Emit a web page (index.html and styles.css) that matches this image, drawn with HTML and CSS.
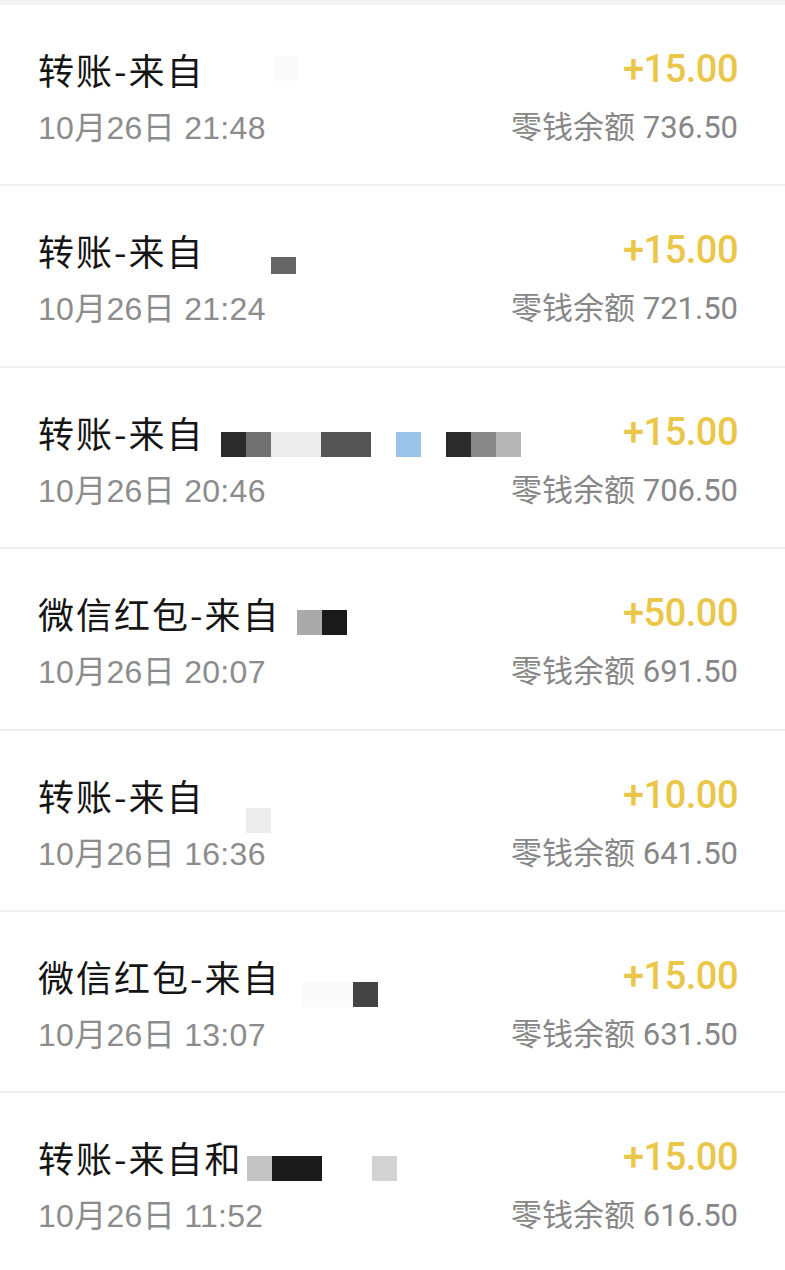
FILE: index.html
```html
<!DOCTYPE html>
<html lang="zh-CN">
<head>
  <meta charset="UTF-8">
  <meta name="viewport" content="width=device-width, initial-scale=1.0">
  <title>零钱明细</title>
  <link rel="stylesheet" href="styles.css">
</head>
<body>
  <div class="top-strip"></div>
  <ul class="bill-list">
    <li class="bill">
      <div class="bill-line">
        <div class="bill-title">转账-来自<span class="mosaic m1"><i class="c-ghost"></i></span></div>
        <div class="bill-amount">+15.00</div>
      </div>
      <div class="bill-line">
        <div class="bill-time">10月26日 21:48</div>
        <div class="bill-balance">零钱余额 736.50</div>
      </div>
    </li>
    <li class="bill">
      <div class="bill-line">
        <div class="bill-title">转账-来自<span class="mosaic m2"><i></i><i></i><i class="c-gray6 short"></i></span></div>
        <div class="bill-amount">+15.00</div>
      </div>
      <div class="bill-line">
        <div class="bill-time">10月26日 21:24</div>
        <div class="bill-balance">零钱余额 721.50</div>
      </div>
    </li>
    <li class="bill">
      <div class="bill-line">
        <div class="bill-title">转账-来自<span class="mosaic m3"><i class="c-gray2"></i><i class="c-gray7"></i><i class="c-grayE"></i><i class="c-grayE"></i><i class="c-gray5"></i><i class="c-gray5"></i><i></i><i class="c-blue"></i><i></i><i class="c-gray2"></i><i class="c-gray8"></i><i class="c-grayB"></i></span></div>
        <div class="bill-amount">+15.00</div>
      </div>
      <div class="bill-line">
        <div class="bill-time">10月26日 20:46</div>
        <div class="bill-balance">零钱余额 706.50</div>
      </div>
    </li>
    <li class="bill">
      <div class="bill-line">
        <div class="bill-title">微信红包-来自<span class="mosaic m4"><i class="c-grayA"></i><i class="c-gray1"></i></span></div>
        <div class="bill-amount">+50.00</div>
      </div>
      <div class="bill-line">
        <div class="bill-time">10月26日 20:07</div>
        <div class="bill-balance">零钱余额 691.50</div>
      </div>
    </li>
    <li class="bill">
      <div class="bill-line">
        <div class="bill-title">转账-来自<span class="mosaic m5"><i></i><i class="c-grayE"></i></span></div>
        <div class="bill-amount">+10.00</div>
      </div>
      <div class="bill-line">
        <div class="bill-time">10月26日 16:36</div>
        <div class="bill-balance">零钱余额 641.50</div>
      </div>
    </li>
    <li class="bill">
      <div class="bill-line">
        <div class="bill-title">微信红包-来自<span class="mosaic m6"><i class="c-ghost"></i><i class="c-ghost"></i><i class="c-gray4"></i></span></div>
        <div class="bill-amount">+15.00</div>
      </div>
      <div class="bill-line">
        <div class="bill-time">10月26日 13:07</div>
        <div class="bill-balance">零钱余额 631.50</div>
      </div>
    </li>
    <li class="bill">
      <div class="bill-line">
        <div class="bill-title">转账-来自和<span class="mosaic m7"><i class="c-grayC"></i><i class="c-gray1"></i><i class="c-gray1"></i><i></i><i></i><i class="c-grayD"></i></span></div>
        <div class="bill-amount">+15.00</div>
      </div>
      <div class="bill-line">
        <div class="bill-time">10月26日 11:52</div>
        <div class="bill-balance">零钱余额 616.50</div>
      </div>
    </li>
  </ul>
</body>
</html>
```

FILE: styles.css
```css
body { margin: 0; background: #fff; font-family: "Noto Sans CJK SC", sans-serif; overflow: hidden; }
.top-strip { height: 5px; background: #f3f3f3; }

.bill-list { list-style: none; margin: 0; padding: 0; }
.bill { box-sizing: border-box; height: 181.4px; padding: 39px 47px 0 38px; border-bottom: 2px solid #efefef; display: flex; flex-direction: column; gap: 14px; }
.bill-line { display: flex; justify-content: space-between; align-items: center; }

.bill-title { display: flex; align-items: flex-start; height: 50px; line-height: 50px; font-size: 36px; letter-spacing: 2px; color: #151515; white-space: nowrap; }
.bill-amount { font-family: Roboto, sans-serif; font-weight: 500; font-size: 38px; letter-spacing: -0.5px; color: #eac649; line-height: 50px; }

.bill-time { font-family: "Liberation Sans", "Noto Sans CJK SC", sans-serif; font-size: 32px; letter-spacing: 0.3px; color: #8c8c8c; line-height: 40px; }
.bill-balance { font-family: Roboto, "Noto Sans CJK SC", sans-serif; font-size: 31px; color: #878787; line-height: 40px; }

/* pixelated name */
.mosaic { display: flex; height: 25px; }
.mosaic i { display: block; width: 25px; height: 25px; }
.mosaic i.short { height: 17px; }
.m1 { margin: 12px 0 0 68px; }
.m2 { margin: 32px 0 0 16px; }
.m3 { margin: 25px 0 0 16px; }
.m4 { margin: 22px 0 0 16px; }
.m5 { margin: 38px 0 0 16px; height: 20px; }
.m6 { margin: 31px 0 0 22px; }
.m7 { margin: 24px 0 0 4px; }

.c-ghost { background: #fafafa; }
.c-gray1 { background: #1a1a1a; }
.c-gray2 { background: #2b2b2b; }
.c-gray4 { background: #444; }
.c-gray5 { background: #555; }
.c-gray6 { background: #666; }
.c-gray7 { background: #717171; }
.c-gray8 { background: #888; }
.c-grayA { background: #aaa; }
.c-grayB { background: #b6b6b6; }
.c-grayC { background: #c4c4c4; }
.c-grayD { background: #d2d2d2; }
.c-grayE { background: #ececec; }
.c-blue { background: #9cc3e8; }
```
